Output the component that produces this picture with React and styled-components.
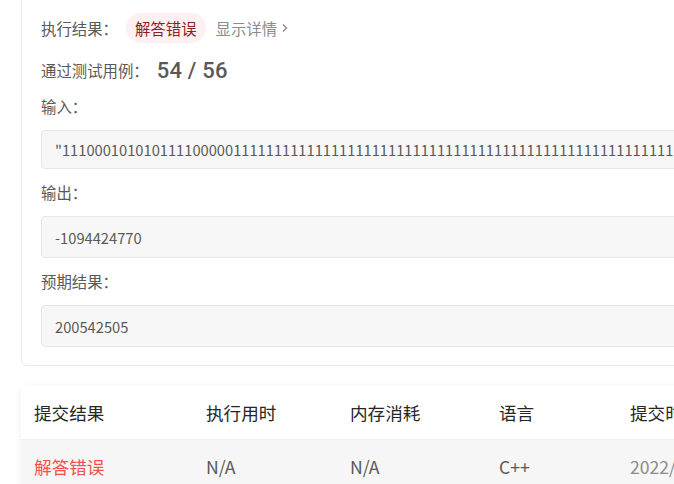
import React from "react";
import styled, { createGlobalStyle } from "styled-components";

const Global = createGlobalStyle`
  html, body { margin: 0; padding: 0; background: #fff; overflow: hidden; }
  body { font-family: "Open Sans", "Noto Sans CJK SC", sans-serif; color: #595959; }
  * { box-sizing: border-box; }
`;

const Page = styled.div`
  width: 820px;
  padding-left: 21px;
  display: flex;
  flex-direction: column;
  gap: 20px;
`;

const ResultCard = styled.section`
  margin-top: -20px;
  border: 1px solid #ebebeb;
  border-radius: 6px;
  padding: 32px 0 18px 19px;
  display: flex;
  flex-direction: column;
`;

const Row = styled.div`
  display: flex;
  align-items: center;
  height: ${(p) => p.$h}px;
  margin-top: ${(p) => p.$mt || 0}px;
`;

const Label = styled.div`
  font-family: "Noto Sans CJK SC", sans-serif;
  font-size: 15.4px;
  line-height: 22px;
  color: #595959;
  margin-top: ${(p) => p.$mt || 0}px;
  margin-right: ${(p) => p.$mr || 0}px;
  white-space: nowrap;
`;

const Badge = styled.span`
  font-family: "Noto Sans CJK SC", sans-serif;
  font-size: 15.4px;
  height: 30px;
  padding: 0 9px;
  border-radius: 15px;
  background: #fdf0f0;
  color: #8e1f1f;
  display: inline-flex;
  align-items: center;
`;

const DetailLink = styled.span`
  font-family: "Noto Sans CJK SC", sans-serif;
  font-size: 15.4px;
  color: #8c8c8c;
  margin-left: 10px;
  display: inline-flex;
  align-items: center;
  gap: 5px;
`;

const Count = styled.span`
  font-family: Roboto, sans-serif;
  font-weight: 500;
  font-size: 22px;
  color: #595959;
  letter-spacing: 0.2px;
  white-space: pre;
`;

const CodeBox = styled.div`
  margin-top: 13px;
  height: ${(p) => p.$h}px;
  background: #f7f7f7;
  border: 1px solid #e6e6e6;
  border-radius: 4px;
  padding-left: 13px;
  display: flex;
  align-items: center;
  font-family: "Noto Sans CJK SC", sans-serif;
  font-size: 14.7px;
  color: #595959;
  white-space: nowrap;
  overflow: hidden;
`;

const TableCard = styled.section`
  background: #fff;
  border-radius: 4px 0 0 0;
  box-shadow: 0 1px 6px rgba(0, 0, 0, 0.07);
  overflow: hidden;
`;

const TRow = styled.div`
  display: grid;
  grid-template-columns: 172px 144px 149px 131px 1fr;
  height: 53px;
  align-items: center;
  background: ${(p) => (p.$head ? "#fff" : "#f6f6f6")};
  border-top: ${(p) => (p.$head ? "none" : "1px solid #efefef")};
`;

const Cell = styled.div`
  padding-left: 13px;
  font-family: "Noto Sans CJK SC", sans-serif;
  font-size: 17.6px;
  color: ${(p) => p.$color || "#595959"};
  white-space: nowrap;
`;

const inputValue = '"1110001010101111000001' + "1".repeat(90);

export default function App() {
  return (
    <>
      <Global />
      <Page>
        <ResultCard>
          <Row $h={30}>
            <Label $mr={8}>执行结果：</Label>
            <Badge>解答错误</Badge>
            <DetailLink>
              显示详情
              <svg width="6" height="10" viewBox="0 0 6 10">
                <path d="M1 1.5 L4.5 5 L1 8.5" fill="none" stroke="#8c8c8c" strokeWidth="1.4" />
              </svg>
            </DetailLink>
          </Row>
          <Row $h={22} $mt={16}>
            <Label $mr={8}>通过测试用例：</Label>
            <Count>54 / 56</Count>
          </Row>
          <Label $mt={14}>输入：</Label>
          <CodeBox $h={39}>{inputValue}</CodeBox>
          <Label $mt={12}>输出：</Label>
          <CodeBox $h={42}>-1094424770</CodeBox>
          <Label $mt={12}>预期结果：</Label>
          <CodeBox $h={42}>200542505</CodeBox>
        </ResultCard>
        <TableCard>
          <TRow $head>
            <Cell $color="#262626">提交结果</Cell>
            <Cell $color="#262626">执行用时</Cell>
            <Cell $color="#262626">内存消耗</Cell>
            <Cell $color="#262626">语言</Cell>
            <Cell $color="#262626">提交时间</Cell>
          </TRow>
          <TRow>
            <Cell $color="#f5504f">解答错误</Cell>
            <Cell>N/A</Cell>
            <Cell>N/A</Cell>
            <Cell>C++</Cell>
            <Cell $color="#8c8c8c">2022/10/08 21:30</Cell>
          </TRow>
        </TableCard>
      </Page>
    </>
  );
}
